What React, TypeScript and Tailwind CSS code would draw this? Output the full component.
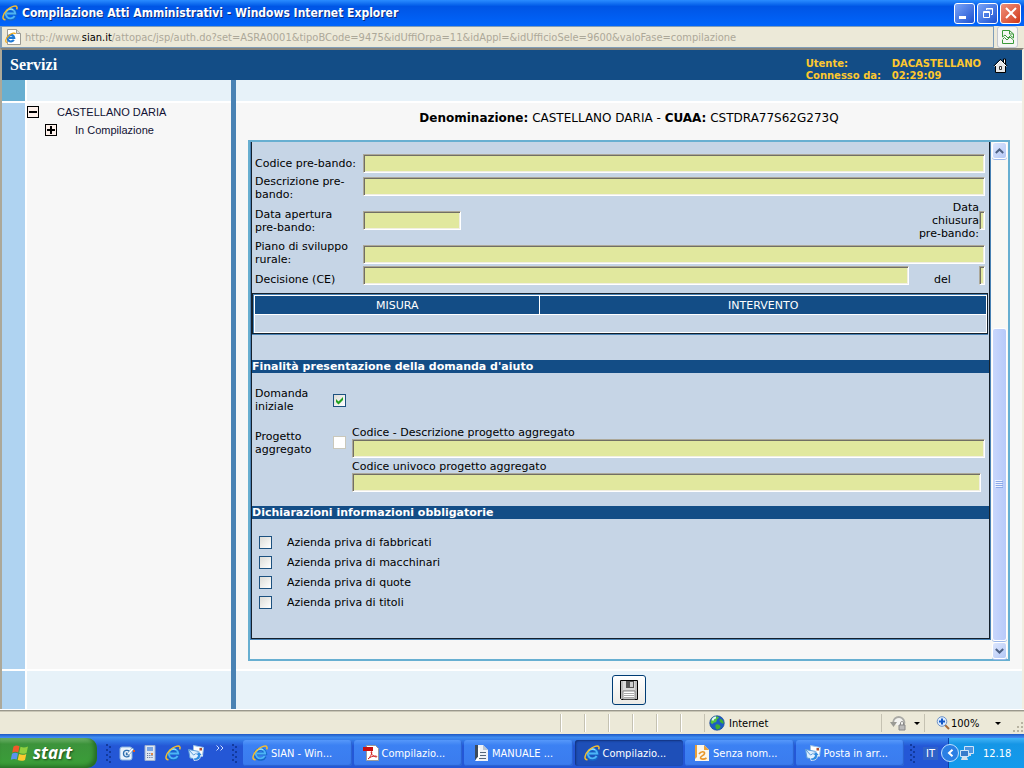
import { useId, type ReactNode } from 'react';

const declarations = [
  'Azienda priva di fabbricati',
  'Azienda priva di macchinari',
  'Azienda priva di quote',
  'Azienda priva di titoli',
];

const tasks = [
  { title: 'SIAN - Win...', icon: <IeIcon />, active: false },
  { title: 'Compilazio...', icon: <PdfIcon />, active: false },
  { title: 'MANUALE ...', icon: <DocIcon />, active: false },
  { title: 'Compilazio...', icon: <IeIcon />, active: true },
  { title: 'Senza nom...', icon: <DrawIcon />, active: false },
  { title: 'Posta in arr...', icon: <MailIcon />, active: false },
];

function IeIcon() {
  return (
    <svg width="16" height="16" viewBox="0 0 16 16" className="shrink-0" aria-hidden="true">
      <path d="M13 11.200A5 5 0 1 1 13.400 8.500H5" fill="none" stroke="#1466c8" strokeWidth="3.400" />
      <path d="M12.600 11A4.700 4.700 0 1 1 13.200 8.500H5" fill="none" stroke="#4db4f6" strokeWidth="1.900" />
      <path d="M5 5.500c1.500-1.600 4-1.900 5.800-.8" stroke="#b5ecff" fill="none" />
      <path d="M3.500 14.800C-.8 14.600 1 9 5 5 9 1.300 14 .1 14.900 2c.3.700.1 1.500-.3 2.400" fill="none" stroke="#f5bd2e" strokeWidth="1.500" />
    </svg>
  );
}

function IePageIcon() {
  return (
    <svg width="16" height="16" viewBox="0 0 16 16" className="shrink-0" aria-hidden="true">
      <path d="M2.500.5h9l4 4v11h-13z" fill="#fff" stroke="#9b9b94" />
      <path d="M11.500.5v4h4" fill="#ddd" stroke="#9b9b94" />
      <path d="M8.800 10.800A3.300 3.300 0 1 1 9.200 8.800H4" fill="none" stroke="#1f79d6" strokeWidth="2.200" />
      <path d="M2 13.500C-.8 12.700 1.500 8.500 4.500 6c2.500-2 5.500-2.600 6-1" fill="none" stroke="#f0a818" strokeWidth="1.200" />
    </svg>
  );
}

function PdfIcon() {
  return (
    <svg width="16" height="16" viewBox="0 0 16 16" className="shrink-0" aria-hidden="true">
      <path d="M3.500.5h9l3 3v12h-12z" fill="#fff" stroke="#999" />
      <path d="M0 2h10v4H0z" fill="#c80f0f" />
      <path d="M5 14c2-1.500 4-5 3.800-7 0-1-1-.6-.6.800.6 2.200 2.800 4 5 4.200 1.400 0 .6-1-1-1-2.400 0-5 .9-7.200 3z" fill="none" stroke="#d32020" />
    </svg>
  );
}

function DocIcon() {
  return (
    <svg width="16" height="16" viewBox="0 0 16 16" className="shrink-0" aria-hidden="true">
      <path d="M3 0h7l5 5v11H3z" fill="#eef2f7" />
      <path d="M2 0h3v12l-3 3z" fill="#3b4a5c" />
      <path d="M5 3v9l-3 4h3l2-4V3z" fill="#fff" />
      <path d="M10 0l5 5h-5z" fill="#b9c4d1" />
      <path d="M7 7.500h6M7 10.500h6M6 13.500h7" stroke="#55677b" />
    </svg>
  );
}

function DrawIcon() {
  return (
    <svg width="16" height="16" viewBox="0 0 16 16" className="shrink-0" aria-hidden="true">
      <path d="M1 0h9l5 5v11H1z" fill="#fbf6ea" />
      <path d="M10 0l5 5h-5z" fill="#e9a13b" />
      <path d="M1 0h2v12l-2 2z" fill="#e9a13b" />
      <path d="M5 9c2-3 6-3 5.500-.5C10 11 6 11 6.500 13c.3 1.500 4 1.500 6 0" fill="none" stroke="#e8962a" strokeWidth="1.600" />
    </svg>
  );
}

function MailIcon() {
  return (
    <svg width="16" height="16" viewBox="0 0 16 16" className="shrink-0" aria-hidden="true">
      <path d="M5.500.5l10 2-1 9-9-1z" fill="#fff" stroke="#9cc0e4" />
      <path d="M11.500 3H14v2.500h-2.500z" fill="#b0502f" />
      <path d="M.5 4.500L11 6.500v8L2 13z" fill="#dcefff" stroke="#5b9bd8" />
      <path d="M1 5l4.500 5L11 7" fill="none" stroke="#5b9bd8" />
      <path d="M6 15.500c4.500 0 6.500-1.500 6.500-5h2L11 6.500 7.500 10H9.500c0 2.500-1.500 3-4 3z" fill="#2f8be0" stroke="#fff" strokeWidth=".7" />
    </svg>
  );
}

function DesktopIcon() {
  return (
    <svg width="16" height="16" viewBox="0 0 16 16" aria-hidden="true">
      <rect x="1" y="2" width="12" height="13" rx="2" fill="#e9f3fc" stroke="#8ab4de" />
      <path d="M10.500 6.500C9 4.500 4.500 5 4.500 8.500s4 4.500 6 2M7.500 7.500v2h2" fill="none" stroke="#2d6fae" strokeWidth="1.300" />
      <path d="M8 9l5-6 2 1-5 6z" fill="#fff" stroke="#4d7fb0" strokeWidth=".6" />
      <path d="M14 5h2v2h-2z" fill="#e2591c" />
    </svg>
  );
}

function CalculatorIcon() {
  return (
    <svg width="16" height="16" viewBox="0 0 16 16" aria-hidden="true">
      <path d="M3 .5h10v15H3z" fill="#dfe7f2" stroke="#9db1d0" />
      <path d="M5 2h6v4H5z" fill="#7aa5e4" />
      <path d="M5 8.500h6M5 10.500h6M5 12.500h6" stroke="#66789a" strokeDasharray="1.200 1" />
      <path d="M9 8h2v2H9z" fill="#e28a4a" />
    </svg>
  );
}

function WindowsLogo() {
  return (
    <svg width="19" height="18" viewBox="0 0 19 18" aria-hidden="true">
      <path d="M3.500 2.500C5.500 1.300 7.500 1.300 9.500 2.300L8.200 8.500C6.300 7.600 4.300 7.600 2.200 8.800z" fill="#f1592a" />
      <path d="M10.500 2.800c2 1 4.500 1.200 7.500-.2L16.500 9c-2.700 1.200-5 1-7.300 0z" fill="#8fd03f" />
      <path d="M2 9.800c2-1.200 4-1.200 6-.3L6.700 15.500C5 14.700 3 14.700.8 15.800z" fill="#5a93ee" />
      <path d="M9 10c2.200 1 4.600 1.200 7.300 0L15 16c-2.500 1.200-5 1-7.300 0z" fill="#fbc92f" />
    </svg>
  );
}

function HomeIcon() {
  return (
    <svg width="15" height="15" viewBox="0 0 15 15" aria-hidden="true">
      <path d="M10.500 1h2v5h-2z" fill="#fff" stroke="#000" />
      <path d="M2.500 7.500v7h10v-7L7.500 2.500z" fill="#e8e8e8" stroke="#000" />
      <path d="M.8 8L7.500 1.300 14.200 8" fill="none" stroke="#000" />
      <path d="M1.500 8.500L7.500 2.500l6 6" fill="none" stroke="#fff" />
      <path d="M6.500 8.500h2v3h-2z" fill="#fff" stroke="#333" />
    </svg>
  );
}

function FloppyIcon() {
  return (
    <svg width="20" height="20" viewBox="0 0 20 20" aria-hidden="true">
      <path d="M1.500.5h17v19h-16l-1-1z" fill="#bdbdbd" stroke="#000" />
      <path d="M4 1h12v9H4z" fill="#d9d9d9" />
      <path d="M7 1h8v7H7z" fill="#555" />
      <path d="M11 2h3v5h-3z" fill="#cfcfcf" />
      <path d="M4 11h12v8H4z" fill="#fff" stroke="#888" />
      <path d="M5 13.500h10M5 15.500h10M5 17.500h10" stroke="#aaa" />
    </svg>
  );
}

function GlobeIcon() {
  return (
    <svg width="16" height="16" viewBox="0 0 16 16" aria-hidden="true">
      <circle cx="8" cy="8" r="7.300" fill="#1d5cc4" stroke="#12418e" strokeWidth=".6" />
      <path d="M3 3.500C5 1 9 1 10 2.500 9 4 7.500 4 7.500 6S4.500 7 4 8.500 1.500 8 1.500 7z" fill="#56c13c" />
      <path d="M11 4c2 0 3.500 2 3.800 4-.8 1.500-2 0-3-.5S10 5 11 4zM7 9.500c2-1 4 .5 4.500 2S9 14.800 8 14.500 5.500 11 7 9.500z" fill="#3fae34" />
      <path d="M3.500 5.500C4 3.500 5.500 2.500 7 2.500" stroke="#dff5ff" strokeWidth="2" fill="none" />
    </svg>
  );
}

function Arrow({ up = false }: { up?: boolean }) {
  return (
    <svg width="9" height="6" viewBox="0 0 9 6" aria-hidden="true">
      <path d={up ? 'M.8 5l3.700-3.500L8.200 5' : 'M.8 1l3.700 3.500L8.200 1'} fill="none" stroke="#4d6185" strokeWidth="2" />
    </svg>
  );
}

function Field({ label, className, id }: { label?: string; className: string; id?: string }) {
  return (
    <input
      id={id}
      type="text"
      readOnly
      aria-label={label}
      className={`h-[19px] min-w-0 border border-t-[#aca899] border-l-[#aca899] border-r-white border-b-white bg-[#e1e89e] shadow-[inset_1px_1px_#716f64,inset_-1px_-1px_#f1efe2] outline-none ${className}`}
    />
  );
}

function Check({ id, checked = false, disabled = false }: { id: string; checked?: boolean; disabled?: boolean }) {
  return (
    <span className="relative block size-[13px] shrink-0">
      <input
        id={id}
        type="checkbox"
        defaultChecked={checked}
        disabled={disabled}
        className="peer block size-[13px] appearance-none border border-[#1c5180] bg-linear-to-br from-[#dcdcd7] to-white disabled:border-[#cac8bb] disabled:from-white"
      />
      <svg viewBox="0 0 13 13" className="pointer-events-none absolute inset-0 opacity-0 peer-checked:opacity-100" aria-hidden="true">
        <path d="M3 5v3l2.500 2.500L10 6V3L5.500 7.500z" fill="#21a121" />
      </svg>
    </span>
  );
}

function SectionTitle({ children }: { children: ReactNode }) {
  return <h2 className="h-[13px] bg-[#134d86] font-bold text-white">{children}</h2>;
}

function TitleBar() {
  return (
    <header className="flex h-[26px] items-center bg-linear-to-b from-[#2a8cff] via-[#0055e5] via-25% to-[#0065fc] pr-[3px] pl-[2px]">
      <IeIcon />
      <h1 className="ml-1 flex-1 font-['DejaVu_Sans_Condensed','DejaVu_Sans',sans-serif] text-[12px] font-bold text-white [text-shadow:1px_1px_#0a2a80]">
        Compilazione Atti Amministrativi - Windows Internet Explorer
      </h1>
      <div className="flex gap-[2px]">
        <button aria-label="Riduci" className="flex size-[21px] items-end rounded-[3px] border border-white bg-linear-to-br from-[#7ba4f7] to-[#1d4fd0] p-1">
          <span className="h-[3px] w-[7px] bg-white" />
        </button>
        <button aria-label="Ripristina" className="flex size-[21px] items-center justify-center rounded-[3px] border border-white bg-linear-to-br from-[#7ba4f7] to-[#1d4fd0]">
          <svg width="12" height="12" viewBox="0 0 12 12" fill="none" stroke="#fff">
            <path d="M4.500 3V1.500h6v6H9M4 2h7" />
            <path d="M1.500 4.500h6v6h-6zM1 5.500h7" />
          </svg>
        </button>
        <button aria-label="Chiudi" className="flex size-[21px] items-center justify-center rounded-[3px] border border-white bg-linear-to-br from-[#f0907a] to-[#cf3410]">
          <svg width="12" height="12" viewBox="0 0 12 12">
            <path d="M1 1l10 10M11 1L1 11" stroke="#fff" strokeWidth="2" />
          </svg>
        </button>
      </div>
    </header>
  );
}

function AddressBar() {
  return (
    <div className="flex h-[22px] border-l-2 border-[#7f9db9] bg-[#ece9d8] font-['DejaVu_Sans_Condensed','DejaVu_Sans',sans-serif]">
      <div className="flex flex-1 items-center gap-1 border-y border-r border-[#7f9db9] pl-[3px]">
        <IePageIcon />
        <p className="text-[11px] whitespace-nowrap text-[#aca899]">
          http://www.<span className="text-black">sian.it</span>
          /attopac/jsp/auth.do?set=ASRA0001&amp;tipoBCode=9475&amp;idUffiOrpa=11&amp;idAppl=&amp;idUfficioSele=9600&amp;valoFase=compilazione
        </p>
      </div>
      <button aria-label="Visualizzazione compatibilità" className="mr-[6px] ml-[3px] flex w-[21px] items-center justify-center rounded-[3px] border border-[#c3c7cf] bg-[#f5f6f4]">
        <svg width="12" height="14" viewBox="0 0 12 14" fill="none" stroke="#3a9a3a">
          <path d="M.5 7V.5h7l4 3.500v4M7.500.5V4h4M.5 10v3.500h11V10" />
          <path d="M.5 9.500l2-2 2.500 2.500L8 7l3.500 3M.5 7L3 5l3 3 2.500-2.500 3 2.500" />
        </svg>
      </button>
    </div>
  );
}

function Tree() {
  return (
    <ul className="font-['Liberation_Sans',Arial,sans-serif] text-[11px] leading-[18px] text-[#111133]">
      <li>
        <div className="flex items-center gap-[18px]">
          <button aria-label="Chiudi ramo" className="flex size-3 items-center justify-center border border-black bg-[#fdf0ea]">
            <span className="h-[2px] w-2 bg-black" />
          </button>
          <span>CASTELLANO DARIA</span>
        </div>
        <ul className="pl-[18px]">
          <li className="flex items-center gap-[18px]">
            <button aria-label="Apri ramo" className="size-3 border border-black bg-[#fdf0ea]">
              <svg width="10" height="10" viewBox="0 0 10 10">
                <path d="M1 5h8M5 1v8" stroke="#000" strokeWidth="2" />
              </svg>
            </button>
            <a href="#compilazione">In Compilazione</a>
          </li>
        </ul>
      </li>
    </ul>
  );
}

function PreBando() {
  const id = useId();
  return (
    <div className="px-[3px] pt-3">
      <div className="flex h-[21px] items-start">
        <label htmlFor={`${id}-cod`} className="w-[108px] pt-[3px] whitespace-nowrap">Codice pre-bando:</label>
        <Field id={`${id}-cod`} className="mr-px flex-1" />
      </div>
      <div className="flex items-start">
        <label htmlFor={`${id}-desc`} className="w-[108px]">Descrizione pre-<br />bando:</label>
        <Field id={`${id}-desc`} className="mt-[2px] mr-px flex-1" />
      </div>
      <div className="flex items-center">
        <label htmlFor={`${id}-open`} className="w-[108px]">Data apertura<br />pre-bando:</label>
        <Field id={`${id}-open`} className="w-[98px]" />
        <label htmlFor={`${id}-close`} className="ml-auto text-right">Data<br />chiusura<br />pre-bando:</label>
        <Field id={`${id}-close`} className="mr-px w-[6px]" />
      </div>
      <div className="flex items-end">
        <label htmlFor={`${id}-plan`} className="w-[108px]">Piano di sviluppo<br />rurale:</label>
        <Field id={`${id}-plan`} className="mr-px mb-[2px] flex-1" />
      </div>
      <div className="flex h-5 items-start">
        <label htmlFor={`${id}-dec`} className="w-[108px] self-end">Decisione (CE)</label>
        <Field id={`${id}-dec`} className="flex-1" />
        <label htmlFor={`${id}-del`} className="w-[70px] self-end pl-[25px]">del</label>
        <Field id={`${id}-del`} className="mr-px w-[6px]" />
      </div>
    </div>
  );
}

function MeasuresTable() {
  return (
    <div className="mt-[7px] mr-px border border-[#14202c] shadow-[0_1px_#4982b4]">
      <div className="border-t border-l border-[#4982b4]">
        <table className="w-full border-collapse border border-white">
          <thead>
            <tr className="h-[19px] bg-[#134d86] text-white">
              <th className="w-[39%] border border-white font-normal">MISURA</th>
              <th className="border border-white font-normal">INTERVENTO</th>
            </tr>
          </thead>
          <tbody>
            <tr className="h-[18px]">
              <td colSpan={2} className="border border-white" />
            </tr>
          </tbody>
        </table>
      </div>
    </div>
  );
}

function Purpose() {
  const id = useId();
  return (
    <div className="pt-[14px] pr-1 pb-[14px] pl-[3px]">
      <div className="flex items-center">
        <label htmlFor={`${id}-first`} className="w-[78px]">Domanda<br />iniziale</label>
        <Check id={`${id}-first`} checked />
      </div>
      <div className="mt-[13px] flex items-start">
        <label htmlFor={`${id}-agg`} className="w-[78px] pt-1">Progetto<br />aggregato</label>
        <div className="w-[19px] pt-[10px]">
          <Check id={`${id}-agg`} disabled />
        </div>
        <div className="flex flex-1 flex-col">
          <label htmlFor={`${id}-name`}>Codice - Descrizione progetto aggregato</label>
          <Field id={`${id}-name`} className="w-full" />
          <label htmlFor={`${id}-uni`} className="mt-[2px]">Codice univoco progetto aggregato</label>
          <Field id={`${id}-uni`} className="mr-1" />
        </div>
      </div>
    </div>
  );
}

function Scrollbar() {
  const button =
    'flex h-[17px] items-center justify-center rounded-[3px] border border-white bg-linear-to-br from-[#dce6fd] to-[#b4c8f6] shadow-[0_1px_#9db8ea]';
  return (
    <div className="flex w-[17px] flex-col bg-[#f9f8f4] px-px">
      <button aria-label="Scorri in alto" className={button}><Arrow up /></button>
      <div className="flex flex-1 flex-col justify-end pb-px">
        <div className="flex h-[65%] flex-col items-center justify-center gap-px rounded-[3px] border border-white bg-linear-to-r from-[#c9d7fc] to-[#b7cafa] shadow-[0_1px_#9db8ea]">
          {[0, 1, 2, 3].map((line) => (
            <span key={line} className="h-px w-[7px] bg-[#8ca9e8] shadow-[-1px_-1px_#eef3ff]" />
          ))}
        </div>
      </div>
      <button aria-label="Scorri in basso" className={button}><Arrow /></button>
    </div>
  );
}

function StatusBar() {
  return (
    <div className="flex h-[22px] items-center bg-[#ece9d8] font-['DejaVu_Sans_Condensed','DejaVu_Sans',sans-serif] text-[11px] text-black">
      <div className="flex-1" />
      {[0, 1, 2, 3, 4, 5].map((cell) => (
        <div key={cell} className="h-[18px] w-6 border-l border-[#c5c2b2] shadow-[inset_1px_0_#fff]" />
      ))}
      <div className="flex h-[18px] w-[177px] items-center gap-1 border-l border-[#c5c2b2] pl-1">
        <GlobeIcon />
        <span>Internet</span>
      </div>
      <button aria-label="Protezione" className="flex h-[18px] w-[43px] items-center gap-[7px] border-l border-[#c5c2b2] pl-2">
        <svg width="17" height="16" viewBox="0 0 17 16">
          <path d="M3.500 9A5.500 5.500 0 1 1 12 12" fill="#f3f3f0" stroke="#a9a9a4" strokeWidth="2" />
          <path d="M0 7h7l-3.500 5z" fill="#9a9a94" />
          <path d="M9 10h6v5H9z" fill="#bbb" stroke="#888" />
          <path d="M10.500 10V8c0-2 3-2 3 0v2" fill="none" stroke="#888" />
        </svg>
        <span className="border-x-[3px] border-t-[3px] border-x-transparent border-t-black" />
      </button>
      <button className="flex h-[18px] w-[77px] items-center border-l border-[#c5c2b2] pl-[11px]">
        <svg width="14" height="14" viewBox="0 0 14 14">
          <path d="M9 9l4 4" stroke="#a86b38" strokeWidth="2" />
          <circle cx="6" cy="5.500" r="4.800" fill="#dcecff" stroke="#6f92c4" />
          <path d="M3 5.500h6M6 2.500v6" stroke="#1258c8" strokeWidth="2" />
        </svg>
        <span className="ml-px">100%</span>
        <span className="ml-auto border-x-[3px] border-t-[3px] border-x-transparent border-t-black" />
      </button>
      <svg width="14" height="18" viewBox="0 0 14 18" className="ml-[9px]">
        <path d="M11 8h2v2h-2zM7 12h2v2H7zM11 12h2v2h-2zM3 16h2v2H3zM7 16h2v2H7zM11 16h2v2h-2z" fill="#b8b4a2" />
      </svg>
    </div>
  );
}

function Grip() {
  return (
    <svg width="6" height="20" viewBox="0 0 6 20" className="shrink-0" aria-hidden="true">
      <path d="M0 1h2v2H0zM3 3h2v2H3zM0 6h2v2H0zM3 8h2v2H3zM0 11h2v2H0zM3 13h2v2H3zM0 16h2v2H0zM3 18h2v2H3z" fill="#123a9e" />
    </svg>
  );
}

function Taskbar() {
  return (
    <footer className="flex h-[34px] items-stretch bg-linear-to-b from-[#1d57c4] via-[#3f8cf0] via-10% to-[#2457d6] to-35% pt-1 font-['DejaVu_Sans_Condensed','DejaVu_Sans',sans-serif] text-[11px] text-white">
      <button className="flex w-[97px] items-center gap-1 rounded-r-[10px] bg-linear-to-b from-[#6fb36b] via-[#3c933b] via-20% to-[#3aa038] pl-[10px] shadow-[inset_-3px_-2px_4px_#256b24]">
        <WindowsLogo />
        <span className="font-['Open_Sans',sans-serif] text-[17px] leading-5 font-bold italic [text-shadow:1px_1px_2px_#1c4a1b]">start</span>
      </button>
      <div className="flex w-[146px] items-center pl-[9px]">
        <Grip />
        <div className="ml-[7px] flex gap-[7px]">
          <a href="#desktop" aria-label="Mostra desktop"><DesktopIcon /></a>
          <a href="#calcolatrice" aria-label="Calcolatrice"><CalculatorIcon /></a>
          <a href="#explorer" aria-label="Internet Explorer"><IeIcon /></a>
          <a href="#posta" aria-label="Posta"><MailIcon /></a>
        </div>
        <button aria-label="Altre icone" className="ml-3 self-start pt-[7px]">
          <svg width="8" height="6" viewBox="0 0 8 6" fill="none" stroke="#cfe0ff">
            <path d="M.5.5L3 3 .5 5.500M4.500.5L7 3 4.500 5.500" />
          </svg>
        </button>
        <span className="ml-2"><Grip /></span>
      </div>
      <nav className="flex flex-1 gap-[2px] py-[2px]">
        {tasks.map((task, index) => (
          <button
            key={index}
            className={`flex min-w-0 flex-1 items-center gap-[3px] overflow-hidden rounded-[3px] pl-[9px] whitespace-nowrap ${
              task.active
                ? 'bg-[#1e4fb8] shadow-[inset_1px_1px_2px_#12327c]'
                : 'bg-linear-to-b from-[#5698fa] via-[#3c81f3] via-20% to-[#3a7bee] shadow-[inset_-1px_-1px_1px_#2a62cf]'
            }`}
          >
            {task.icon}
            <span>{task.title}</span>
          </button>
        ))}
      </nav>
      <div className="flex w-11 items-center pl-[6px]">
        <Grip />
        <span className="ml-[7px] bg-[#2f62c8] px-[3px]">IT</span>
      </div>
      <div className="flex w-[76px] items-center border-l border-[#0b3fa8] bg-linear-to-b from-[#3fb4f6] via-[#1596e6] via-20% to-[#139aec]">
        <button aria-label="Mostra icone nascoste" className="-ml-[8px] flex size-[18px] shrink-0 items-center justify-center rounded-full border border-[#bfe2ff] bg-[#2a7fe4]">
          <svg width="7" height="8" viewBox="0 0 7 8">
            <path d="M5.500.8L2 4l3.500 3.200" fill="none" stroke="#fff" strokeWidth="2" />
          </svg>
        </button>
        <svg width="16" height="16" viewBox="0 0 16 16" className="shrink-0" aria-hidden="true">
          <path d="M5.500 1.500h9v7h-9z" fill="#4d95e0" stroke="#cfe4f8" />
          <path d="M8 9h4v2H8z" fill="#cfd9e6" />
          <path d="M1.500 5.500h8v6h-8z" fill="#3a7bcb" stroke="#cfe4f8" />
          <path d="M3 12h5l1 3H2z" fill="#d5dfeb" />
        </svg>
        <time className="ml-[8px]">12.18</time>
      </div>
    </footer>
  );
}

export default function App() {
  const id = useId();
  return (
    <div className="flex min-h-screen flex-col bg-[#ece9d8] font-['DejaVu_Sans',Verdana,sans-serif] text-[11px] leading-[13px] text-black">
      <TitleBar />
      <AddressBar />
      <div className="flex flex-1 flex-col border-t-2 border-r-2 border-l-2 border-t-[#86837a] border-r-[#f1efe2] border-l-[#aca899] bg-white">
        <div className="flex h-[30px] items-start overflow-hidden bg-[#134d86] pr-[14px] pl-2">
          <h1 className="flex-1 self-center font-['Liberation_Serif',serif] text-[16px] leading-5 font-bold text-white">Servizi</h1>
          <dl className="grid grid-cols-[86px_1fr] pt-2 text-[10px] leading-3 font-bold text-[#fdc82f]">
            <dt>Utente:</dt>
            <dd>DACASTELLANO</dd>
            <dt>Connesso da:</dt>
            <dd>02:29:09</dd>
          </dl>
          <a href="#home" aria-label="Home" className="ml-3 pt-2"><HomeIcon /></a>
        </div>
        <div className="flex flex-1">
          <div className="flex w-[23px] flex-col gap-[2px]">
            <div className="h-[21px] bg-[#68afd1]" />
            <div className="flex-1 bg-[#afd3f1]" />
            <div className="h-[38px] bg-[#afd3f1]" />
          </div>
          <aside className="ml-[2px] flex w-[204px] flex-col gap-[2px]">
            <div className="h-[21px] bg-[#e7f2f9]" />
            <div className="flex-1 bg-[#f7f7f7]">
              <Tree />
            </div>
            <div className="h-[38px] bg-[#e7f2f9]" />
          </aside>
          <div className="w-[5px] bg-[#4982b4]" />
          <main className="flex flex-1 flex-col gap-[2px]">
            <div className="h-[21px] bg-[#e7f2f9]" />
            <div className="flex flex-1 flex-col bg-[#f7f7f7] px-3 pt-[9px] pb-2">
              <p className="mb-[15px] text-center text-[12px] leading-[13px]">
                <b>Denominazione:</b> CASTELLANO DARIA - <b>CUAA:</b> CSTDRA77S62G273Q
              </p>
              <div className="flex flex-1 border-2 border-[#68afd1]">
                <form className="flex-1 self-start border-x border-b border-[#4982b4] bg-[#c6d5e6]">
                  <div className="border-r border-b border-l border-[#14202c] pb-[26px]">
                    <PreBando />
                    <MeasuresTable />
                    <div className="h-[26px]" />
                    <SectionTitle>Finalità presentazione della domanda d'aiuto</SectionTitle>
                    <Purpose />
                    <SectionTitle>Dichiarazioni informazioni obbligatorie</SectionTitle>
                    <ul className="pt-[13px] pl-[7px]">
                      {declarations.map((text, index) => (
                        <li key={text} className="flex h-5 items-center gap-[15px]">
                          <Check id={`${id}-${index}`} />
                          <label htmlFor={`${id}-${index}`}>{text}</label>
                        </li>
                      ))}
                    </ul>
                  </div>
                </form>
                <Scrollbar />
              </div>
            </div>
            <div className="flex h-[38px] items-center justify-center bg-[#e7f2f9]">
              <button aria-label="Salva" className="flex h-[30px] w-[34px] items-center justify-center rounded-[3px] border border-[#003c74] bg-linear-to-b from-white to-[#ecebe6]">
                <FloppyIcon />
              </button>
            </div>
          </main>
        </div>
      </div>
      <div className="h-[3px] border-y border-t-white border-b-[#c9c6b6] bg-[#9a988c]" />
      <StatusBar />
      <Taskbar />
    </div>
  );
}
